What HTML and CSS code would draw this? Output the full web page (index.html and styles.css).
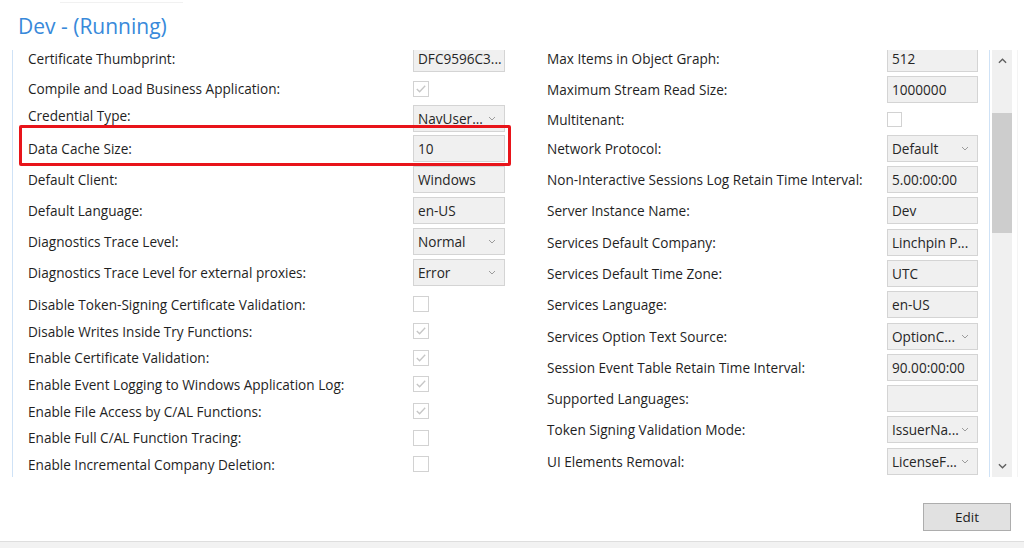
FILE: index.html
```html
<!DOCTYPE html>
<html>
<head>
<meta charset="utf-8">
<link rel="stylesheet" href="styles.css">
</head>
<body>
<div class="app">
  <header class="head">
    <div class="tab"></div>
    <h1 class="title">Dev - (Running)</h1>
  </header>
  <div class="main">
    <div class="panel">
      <div class="panel-inner">
        <div class="col col-left">
          <div class="row"><span class="label">Certificate Thumbprint:</span><span class="field">DFC9596C3...</span></div>
          <div class="row cb tall"><span class="label">Compile and Load Business Application:</span><span class="check on"><svg viewBox="0 0 15 15"><path d="M3 7.5l3 3 6-6.5"/></svg></span></div>
          <div class="row mid"><span class="label raised">Credential Type:</span><span class="field dd">NavUser...<svg class="chev" viewBox="0 0 8 5"><path d="M1 1l3 3 3-3"/></svg></span></div>
          <div class="row hl"><span class="label">Data Cache Size:</span><span class="field">10</span><span class="mark"></span></div>
          <div class="row"><span class="label">Default Client:</span><span class="field">Windows</span></div>
          <div class="row"><span class="label">Default Language:</span><span class="field">en-US</span></div>
          <div class="row"><span class="label">Diagnostics Trace Level:</span><span class="field dd">Normal<svg class="chev" viewBox="0 0 8 5"><path d="M1 1l3 3 3-3"/></svg></span></div>
          <div class="row"><span class="label">Diagnostics Trace Level for external proxies:</span><span class="field dd">Error<svg class="chev" viewBox="0 0 8 5"><path d="M1 1l3 3 3-3"/></svg></span></div>
          <div class="row cb first"><span class="label">Disable Token-Signing Certificate Validation:</span><span class="check"></span></div>
          <div class="row cb"><span class="label">Disable Writes Inside Try Functions:</span><span class="check on"><svg viewBox="0 0 15 15"><path d="M3 7.5l3 3 6-6.5"/></svg></span></div>
          <div class="row cb"><span class="label">Enable Certificate Validation:</span><span class="check on"><svg viewBox="0 0 15 15"><path d="M3 7.5l3 3 6-6.5"/></svg></span></div>
          <div class="row cb"><span class="label">Enable Event Logging to Windows Application Log:</span><span class="check on"><svg viewBox="0 0 15 15"><path d="M3 7.5l3 3 6-6.5"/></svg></span></div>
          <div class="row cb"><span class="label">Enable File Access by C/AL Functions:</span><span class="check on"><svg viewBox="0 0 15 15"><path d="M3 7.5l3 3 6-6.5"/></svg></span></div>
          <div class="row cb"><span class="label">Enable Full C/AL Function Tracing:</span><span class="check"></span></div>
          <div class="row cb"><span class="label">Enable Incremental Company Deletion:</span><span class="check"></span></div>
        </div>
        <div class="col col-right">
          <div class="row r"><span class="label">Max Items in Object Graph:</span><span class="field">512</span></div>
          <div class="row r"><span class="label">Maximum Stream Read Size:</span><span class="field">1000000</span></div>
          <div class="row cb rc"><span class="label">Multitenant:</span><span class="check sm"></span></div>
          <div class="row r"><span class="label">Network Protocol:</span><span class="field dd">Default<svg class="chev" viewBox="0 0 8 5"><path d="M1 1l3 3 3-3"/></svg></span></div>
          <div class="row r"><span class="label">Non-Interactive Sessions Log Retain Time Interval:</span><span class="field">5.00:00:00</span></div>
          <div class="row r"><span class="label">Server Instance Name:</span><span class="field">Dev</span></div>
          <div class="row r"><span class="label">Services Default Company:</span><span class="field">Linchpin P...</span></div>
          <div class="row r"><span class="label">Services Default Time Zone:</span><span class="field">UTC</span></div>
          <div class="row r"><span class="label">Services Language:</span><span class="field">en-US</span></div>
          <div class="row r"><span class="label">Services Option Text Source:</span><span class="field dd">OptionC...<svg class="chev" viewBox="0 0 8 5"><path d="M1 1l3 3 3-3"/></svg></span></div>
          <div class="row r"><span class="label">Session Event Table Retain Time Interval:</span><span class="field">90.00:00:00</span></div>
          <div class="row r"><span class="label">Supported Languages:</span><span class="field"></span></div>
          <div class="row r"><span class="label">Token Signing Validation Mode:</span><span class="field dd">IssuerNa...<svg class="chev" viewBox="0 0 8 5"><path d="M1 1l3 3 3-3"/></svg></span></div>
          <div class="row r"><span class="label">UI Elements Removal:</span><span class="field dd">LicenseF...<svg class="chev" viewBox="0 0 8 5"><path d="M1 1l3 3 3-3"/></svg></span></div>
        </div>
      </div>
    </div>
    <div class="scroll">
      <div class="track">
        <div class="arrow"><svg viewBox="0 0 10 6"><path d="M1 5l4-4 4 4"/></svg></div>
        <div class="thumb"></div>
        <div class="spacer"></div>
        <div class="arrow"><svg viewBox="0 0 10 6"><path d="M1 1l4 4 4-4"/></svg></div>
      </div>
    </div>
    <div class="edge"></div>
  </div>
  <div class="actions"><button class="btn">Edit</button></div>
  <div class="status"></div>
</div>
</body>
</html>
```

FILE: styles.css
```css
* { box-sizing: border-box; }
html, body { margin: 0; padding: 0; background: #fff; }
body {
  width: 1024px;
  height: 548px;
  overflow: hidden;
  font-family: "Open Sans", "Noto Sans", "DejaVu Sans", sans-serif;
  font-size: 13.6px;
  color: #1f1f1f;
}
.app { display: flex; flex-direction: column; height: 548px; }

.head { height: 50px; position: relative; padding-top: 12px; }
.tab {
  position: absolute; left: 60px; top: 0; width: 123px; height: 3px;
  border-bottom: 1px solid #f1f1f1;
}
.title {
  margin: 0; padding-left: 18px;
  font-size: 21px; font-weight: 400; line-height: 28px;
  color: #3889da;
}

.main { height: 427px; display: flex; padding-left: 12px; }
.panel {
  width: 977px; height: 100%;
  border-left: 1px solid #cfe2f6;
  overflow: hidden;
}
.panel-inner { display: flex; margin-top: -7px; padding-left: 15px; }
.col { display: flex; flex-direction: column; }
.col-left { width: 477px; margin-right: 42px; }
.col-right { width: 431px; }

.row { display: flex; align-items: center; height: 31px; position: relative; }
.row.mid { height: 30px; }
.row.r { height: 31.3px; }
.row.cb { height: 26.7px; }
.row.cb.tall { height: 29px; }
.row.cb.rc { height: 27px; }
.row.cb.first { margin-top: 3px; }
.label { flex: 1; white-space: nowrap; }
.label.raised { margin-bottom: 6px; }

.field {
  width: 92px; height: 27px;
  display: flex; align-items: center; justify-content: space-between;
  padding: 0 8px 0 4px;
  background: #f0f0f0;
  border: 1px solid #d4d4d4;
  color: #262626;
  white-space: nowrap;
  overflow: hidden;
}
.col-right .field { width: 91px; }
.chev { flex: none; width: 8px; height: 5px; fill: none; stroke: #9c9c9c; stroke-width: 1; }

.check {
  width: 16px; height: 16px; margin-right: 76px;
  border: 1px solid #d2d2d2; background: #fff;
  display: flex; align-items: center; justify-content: center;
}
.check.sm { width: 15px; height: 15px; margin-right: 76px; }
.check svg { width: 14px; height: 14px; fill: none; stroke: #c6c6c6; stroke-width: 1.4; }

.mark {
  position: absolute; left: -9px; right: -6px; top: -8px; bottom: -2px;
  border: 3px solid #e8141a; border-radius: 2px;
}

.scroll {
  width: 23px; height: 100%;
  border-left: 1px solid #cfe2f6;
  padding-left: 2px;
}
.track {
  width: 20px; height: 100%;
  background: #f0f0f0;
  display: flex; flex-direction: column;
}
.arrow { height: 22px; display: flex; align-items: center; justify-content: center; }
.arrow svg { width: 9px; height: 6px; fill: none; stroke: #5f5f5f; stroke-width: 1.5; }
.thumb { margin-top: 41px; height: 120px; background: #cdcdcd; }
.spacer { flex: 1; }
.edge { width: 1px; margin-left: 5px; background: #f4f4f4; }

.actions { height: 64px; display: flex; justify-content: flex-end; align-items: flex-start; padding: 26px 13px 0 0; }
.btn {
  width: 88px; height: 28px;
  background: #e1e1e1; border: 1px solid #adadad; border-radius: 0;
  font-family: "Open Sans", "Noto Sans", sans-serif; font-size: 13.5px; color: #1e1e1e;
  padding: 0;
}
.status { flex: 1; border-top: 1px solid #dedede; background: #f2f2f2; }
```
